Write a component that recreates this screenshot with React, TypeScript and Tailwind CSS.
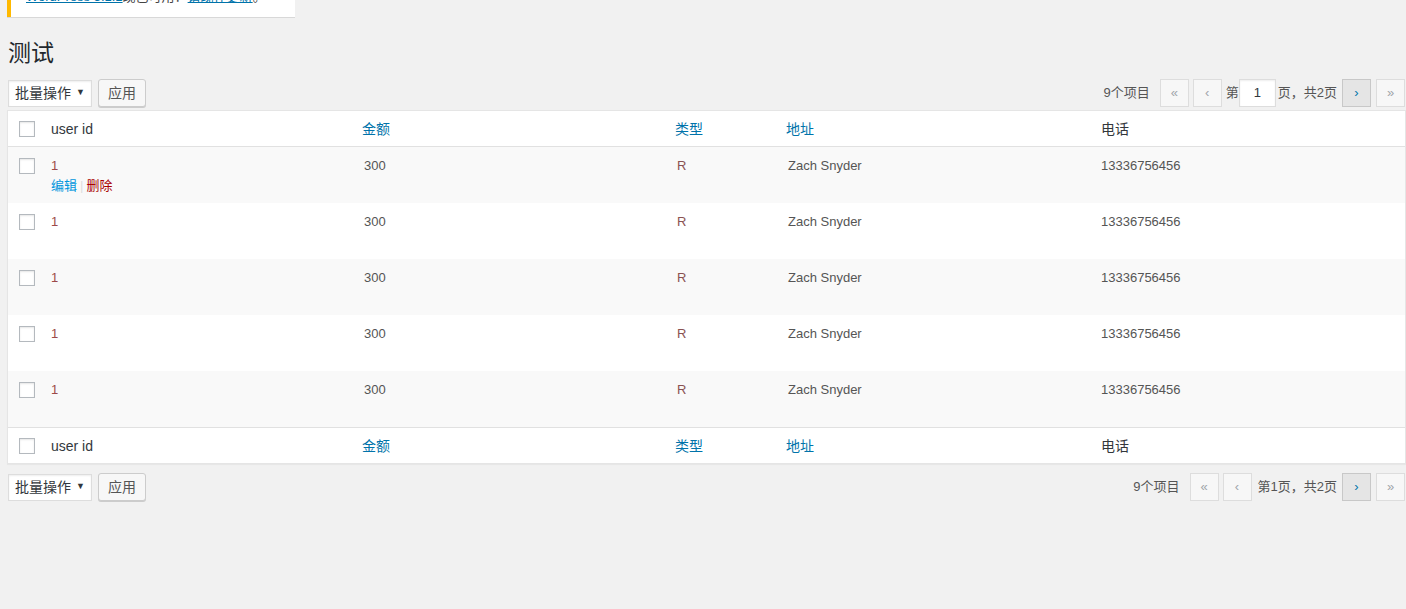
import React from "react";

const font = { fontFamily: '"Liberation Sans", "Noto Sans CJK SC", sans-serif' };

function Checkbox() {
  return <span className="block w-[16px] h-[16px] border border-[#b4b9be] bg-white shadow-[inset_0_1px_2px_rgba(0,0,0,0.1)]" />;
}

const cols = "grid grid-cols-[33px_311px_313px_111px_315px_1fr]";

function HeaderRow({ top }: { top: boolean }) {
  return (
    <div className={`${cols} h-[36px] items-center bg-white text-[14px] ${top ? "border-b border-[#e1e1e1]" : "border-t border-[#e1e1e1]"}`}>
      <div className="pl-[11px]"><Checkbox /></div>
      <div className="pl-[10px] pt-[1px] text-[#32373c]">user id</div>
      <div className="pl-[10px] pt-[1px] text-[#0073aa]">金额</div>
      <div className="pl-[10px] pt-[1px] text-[#0073aa]">类型</div>
      <div className="pl-[10px] pt-[1px] text-[#0073aa]">地址</div>
      <div className="pl-[10px] pt-[1px] text-[#32373c]">电话</div>
    </div>
  );
}

function Row({ odd, actions }: { odd: boolean; actions?: boolean }) {
  return (
    <div className={`${cols} h-[56px] items-start text-[13px] leading-[19.5px] ${odd ? "bg-[#f9f9f9]" : "bg-white"}`}>
      <div className="pl-[11px] pt-[11px]"><Checkbox /></div>
      <div className="pl-[10px] pt-[9px]">
        <div className="text-[#9c4a4a]">1</div>
        {actions && (
          <div className="flex items-center">
            <span className="text-[#0096dd]">编辑</span>
            <span className="text-[#ddd] mx-[3px]">|</span>
            <span className="text-[#a00]">删除</span>
          </div>
        )}
      </div>
      <div className="pl-[12px] pt-[9px] text-[#555]">300</div>
      <div className="pl-[12px] pt-[9px] text-[#8a5252]">R</div>
      <div className="pl-[12px] pt-[9px] text-[#555]">Zach Snyder</div>
      <div className="pl-[10px] pt-[9px] text-[#555]">13336756456</div>
    </div>
  );
}

function PageBtn({ children, active }: { children: React.ReactNode; active?: boolean }) {
  return (
    <span
      className={`flex items-center justify-center w-[29px] h-[28px] border text-[13px] ${
        active ? "bg-[#e5e5e5] border-[#c8c8c8] text-[#0073aa]" : "bg-[#f7f7f7] border-[#ddd] text-[#a0a5aa]"
      }`}
    >
      {children}
    </span>
  );
}

function TableNav({ top }: { top: boolean }) {
  return (
    <div className="flex justify-between items-center h-[28px] pl-[1px] pr-[1px]">
      <div className="flex items-center">
        <div className="flex items-center justify-between w-[84px] h-[27px] bg-white border border-[#ddd] shadow-[inset_0_1px_2px_rgba(0,0,0,0.07)] pl-[6px] pr-[6px] text-[14px] text-[#32373c]">
          <span>批量操作</span>
          <span className="text-[9px]">▼</span>
        </div>
        <div className="ml-[6px] flex items-center justify-center w-[48px] h-[28px] bg-[#f7f7f7] border border-[#ccc] rounded-[3px] shadow-[0_1px_0_#ccc] text-[14px] text-[#555]">
          应用
        </div>
      </div>
      <div className="flex items-center text-[13px] text-[#555]">
        <span className={top ? "mr-[10px]" : "mr-[10px]"}>9个项目</span>
        <PageBtn>«</PageBtn>
        <span className="ml-[4px]"><PageBtn>‹</PageBtn></span>
        {top ? (
          <>
            <span className="ml-[4px]">第</span>
            <span className="flex items-center justify-center w-[37px] h-[28px] bg-white border border-[#ddd] shadow-[inset_0_1px_2px_rgba(0,0,0,0.07)] text-[#32373c]">1</span>
            <span className="ml-[2px]">页，共2页</span>
          </>
        ) : (
          <span className="ml-[6px]">第1页，共2页</span>
        )}
        <span className="ml-[5px]"><PageBtn active>›</PageBtn></span>
        <span className="ml-[5px]"><PageBtn>»</PageBtn></span>
      </div>
    </div>
  );
}

export default function App() {
  return (
    <div className="min-h-[609px] w-[1406px] bg-[#f1f1f1] overflow-hidden" style={font}>
      <div className="h-[18px] overflow-hidden flex flex-col justify-end ml-[7px] w-[288px]">
        <div className="bg-white border-l-4 border-[#ffb900] shadow-[0_1px_1px_rgba(0,0,0,0.1)] pl-[15px] pb-[11px] mb-[1px] text-[13px] leading-[19px] text-[#444]">
          <span className="text-[#0073aa] underline">WordPress 5.1.1</span>现已可用！<span className="text-[#0073aa] underline">请现在更新</span>。
        </div>
      </div>
      <div className="ml-[7px] w-[1399px]">
        <h1 className="mt-[20px] pl-[1px] text-[23px] leading-[30px] text-[#23282d]">测试</h1>
        <div className="mt-[11px]">
          <TableNav top />
        </div>
        <div className="mt-[3px] border border-[#e5e5e5] shadow-[0_1px_1px_rgba(0,0,0,0.04)]">
          <HeaderRow top />
          <Row odd actions />
          <Row odd={false} />
          <Row odd />
          <Row odd={false} />
          <Row odd />
          <HeaderRow top={false} />
        </div>
        <div className="mt-[9px]">
          <TableNav top={false} />
        </div>
      </div>
    </div>
  );
}
